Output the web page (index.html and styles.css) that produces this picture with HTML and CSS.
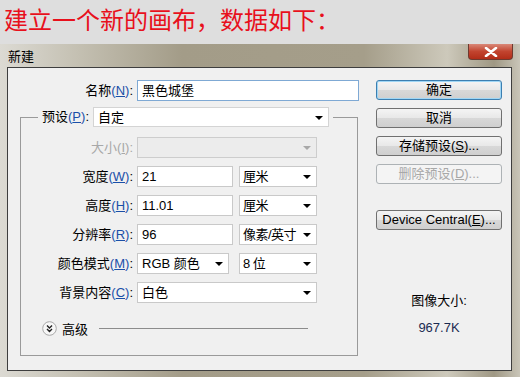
FILE: index.html
```html
<!DOCTYPE html>
<html>
<head>
	<meta charset="utf-8">
	<title>新建</title>
	<link rel="stylesheet" href="styles.css">
</head>
<body>
	<h1 class="note">建立一个新的画布，数据如下：</h1>
	<div class="window">
		<div class="titlebar">
			<span class="title">新建</span>
			<span class="close">
				<svg width="14" height="10" viewBox="0 0 14 10"><path d="M2 1 L12 9 M12 1 L2 9" stroke="#fff" stroke-width="2.6" stroke-linecap="round"/></svg>
			</span>
		</div>
		<div class="dialog">
			<div class="main">
				<div class="name-row">
					<span class="lbl">名称<span class="key">(<u>N</u>)</span>:</span>
					<div class="field focus">黑色城堡</div>
				</div>
				<fieldset class="group">
					<legend class="preset">
						<span class="lbl">预设<span class="key">(<u>P</u>)</span>:</span>
						<div class="field select preset-sel">自定</div>
					</legend>
					<div class="rows">
						<span class="lbl off">大小(<u>I</u>):</span>
						<div class="field select off w-full"></div>

						<span class="lbl">宽度<span class="key">(<u>W</u>)</span>:</span>
						<div class="pair">
							<div class="field w-num">21</div>
							<div class="field select w-unit">厘米</div>
						</div>

						<span class="lbl">高度<span class="key">(<u>H</u>)</span>:</span>
						<div class="pair">
							<div class="field w-num">11.01</div>
							<div class="field select w-unit">厘米</div>
						</div>

						<span class="lbl">分辨率<span class="key">(<u>R</u>)</span>:</span>
						<div class="pair">
							<div class="field w-num">96</div>
							<div class="field select w-unit">像素/英寸</div>
						</div>

						<span class="lbl">颜色模式<span class="key">(<u>M</u>)</span>:</span>
						<div class="pair">
							<div class="field select w-mode">RGB 颜色</div>
							<div class="field select w-unit">8 位</div>
						</div>

						<span class="lbl">背景内容<span class="key">(<u>C</u>)</span>:</span>
						<div class="field select w-full">白色</div>
					</div>
					<div class="advanced">
						<span class="chev">
							<svg width="15" height="15" viewBox="0 0 15 15">
								<circle cx="7.5" cy="7.5" r="6.8" fill="#f7f7f7" stroke="#a8a8a8"/>
								<path d="M5 4.5 L7.5 7 L10 4.5 M5 8 L7.5 10.5 L10 8" fill="none" stroke="#222" stroke-width="1.4"/>
							</svg>
						</span>
						<span>高级</span>
						<span class="rule"></span>
					</div>
				</fieldset>
			</div>
			<div class="side">
				<button class="btn default">确定</button>
				<button class="btn">取消</button>
				<button class="btn">存储预设(<u>S</u>)...</button>
				<button class="btn" disabled>删除预设(<u>D</u>)...</button>
				<button class="btn device">Device Central(<u>E</u>)...</button>
				<div class="info">
					<div>图像大小:</div>
					<div class="size">967.7K</div>
				</div>
			</div>
		</div>
	</div>
</body>
</html>
```

FILE: styles.css
```css
body{
	margin: 0;
	background-color: #dedede;
	font-family: "Liberation Sans", "Noto Sans CJK SC", sans-serif;
	font-size: 13px;
	color: #000;
}
.note{
	height: 44px;
	margin: 0;
	padding-left: 4px;
	font: normal 24px/38px "Noto Sans CJK SC", sans-serif;
	color: #e8101c;
}
.window{
	height: 333px;
	padding: 0 8px 0 7px;
	background: linear-gradient(to right, #dcdad3 0%, #c4c0b2 15%, #a39c88 35%, #a59e8a 70%, #cdc9bb 86%, #9f9884 95%, #c9c5b8 100%);
	box-sizing: border-box;
}
.titlebar{
	display: flex;
	justify-content: space-between;
	align-items: flex-start;
	height: 23px;
	margin-right: -1px;
}
.title{
	padding: 4px 0 0 1px;
	line-height: 15px;
	font-family: "Noto Sans CJK SC", sans-serif;
}
.close{
	display: flex;
	align-items: center;
	justify-content: center;
	width: 45px;
	height: 16px;
	background: linear-gradient(#d98878, #c2442f 50%, #b22d18);
	border: 1px solid #6e3a30;
	border-top: none;
	border-radius: 0 0 4px 4px;
	box-sizing: border-box;
}
.dialog{
	display: flex;
	height: 304px;
	background-color: #f0f0f0;
	border: 1px solid #3e3e3e;
	box-sizing: border-box;
}
.main{
	padding: 12px 0 0 12px;
}
.lbl{
	text-align: right;
	line-height: 21px;
	white-space: nowrap;
}
.key{
	color: #1a4fa8;
}
.off,
.off .key{
	color: #a8a8a8;
}
.name-row{
	display: grid;
	grid-template-columns: 113px 222px;
	column-gap: 4px;
}
.field{
	position: relative;
	height: 21px;
	padding-left: 4px;
	line-height: 20px;
	background-color: #fff;
	border: 1px solid #c9c9c9;
	box-sizing: border-box;
	white-space: nowrap;
}
.focus{
	border-color: #7fa9d4;
}
.select::after{
	content: "";
	position: absolute;
	right: 5px;
	top: 8px;
	border-top: 4px solid #000;
	border-left: 4px solid transparent;
	border-right: 4px solid transparent;
}
.select.off{
	background-color: #ececec;
	border-color: #cdcdcd;
}
.select.off::after{
	border-top-color: #a8a8a8;
}
.group{
	width: 338px;
	margin: 6px 0 0;
	padding: 0;
	border: 1px solid #9a9a9a;
	box-sizing: border-box;
}
.preset{
	display: flex;
	gap: 4px;
	margin-left: 17px;
	padding: 0 4px;
}
.preset .lbl{
	line-height: 20px;
}
.preset-sel{
	width: 236px;
	height: 20px;
	line-height: 19px;
	border-color: #d4d4d4;
}
.rows{
	display: grid;
	grid-template-columns: 112px 180px;
	column-gap: 4px;
	row-gap: 8px;
	padding-top: 10px;
}
.pair{
	display: flex;
	justify-content: space-between;
}
.w-full{
	width: 180px;
}
.w-num{
	width: 96px;
}
.w-unit{
	width: 78px;
}
.w-unit.select{
	padding-left: 3px;
	letter-spacing: -0.5px;
}
.w-mode{
	width: 92px;
}
.advanced{
	display: flex;
	align-items: center;
	height: 15px;
	margin: 18px 0 19px 21px;
	gap: 5px;
}
.chev{
	display: flex;
}
.rule{
	width: 209px;
	margin-left: 6px;
	border-top: 1px solid #8c8c8c;
}
.side{
	display: flex;
	flex-direction: column;
	width: 126px;
	padding: 12px 0 0 17px;
	gap: 8px;
}
.btn{
	height: 20px;
	padding: 0;
	font-family: "Liberation Sans", "Noto Sans CJK SC", sans-serif;
	font-size: 13px;
	line-height: 18px;
	color: #000;
	background: linear-gradient(#f4f4f4, #e8e8e8 50%, #d8d8d8 51%, #cfcfcf);
	border: 1px solid #707070;
	border-radius: 3px;
}
.btn.default{
	border-color: #3c7fb1;
	box-shadow: inset 0 0 0 1px #9fd6f5;
}
.btn:disabled{
	color: #a8a8a8;
	background: #f4f4f4;
	border-color: #adb2b5;
}
.btn.device{
	margin-top: 18px;
}
.info{
	margin-top: 55px;
	text-align: center;
	line-height: 16px;
}
.info .size{
	margin-top: 11px;
	color: #1a2a50;
}
```
